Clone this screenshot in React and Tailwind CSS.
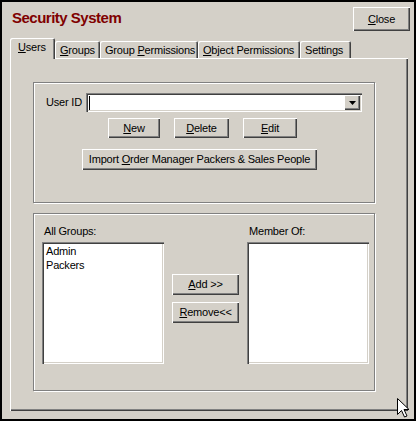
const raised = 'bg-[#d4d0c8] shadow-[inset_1px_1px_0_#fff,inset_-1px_-1px_0_#404040,inset_-2px_-2px_0_#808080]'
const sunken = 'bg-white shadow-[inset_1px_1px_0_#808080,inset_2px_2px_0_#404040,inset_-1px_-1px_0_#fff,inset_-2px_-2px_0_#d4d0c8]'
const etched = 'border border-[#808080] shadow-[inset_1px_1px_0_#fff,1px_1px_0_#fff]'

function Btn({ className = '', children }) {
    return (
        <button className={`${raised} flex items-center justify-center leading-none ${className}`}>
            {children}
        </button>
    )
}

function Tab({ label, hot, rest, active, className = '' }) {
    return (
        <div
            className={`flex items-center rounded-t-[2px] bg-[#d4d0c8] whitespace-nowrap shadow-[inset_1px_1px_0_#fff,inset_-1px_0_0_#404040,inset_-2px_0_0_#808080] ${
                active ? 'pl-[8px] h-[21px] -mb-px relative z-10 pb-[2px]' : 'pl-[5px] h-[17px] pt-[1px]'
            } ${className}`}
        >
            <span>
                {hot && <u>{hot}</u>}
                {rest}
            </span>
        </div>
    )
}

export default function App() {
    const groups = ['Admin', 'Packers']

    return (
        <div className="relative w-[416px] h-[421px] bg-[#d4d0c8] border-2 border-black font-['Liberation_Sans',Arial,sans-serif] text-[11px] tracking-[-0.2px] text-black select-none">
            {/* header */}
            <div className="flex items-start h-[36px]">
                <h1 className="ml-[10px] mt-[7px] text-[15px] leading-[18px] font-bold tracking-[-0.5px] text-[#800000]">
                    Security System
                </h1>
                <Btn className="ml-auto mr-[4px] mt-[5px] w-[57px] h-[24px]">
                    <span><u>C</u>lose</span>
                </Btn>
            </div>

            {/* tabs */}
            <div className="flex items-end ml-[8px] h-[20px]">
                <Tab active hot="U" rest="sers" className="w-[45px]" />
                <Tab hot="G" rest="roups" className="w-[45px]" />
                <Tab rest={<>Group <u>P</u>ermissions</>} className="w-[98px]" />
                <Tab hot="O" rest="bject Permissions" className="w-[102px]" />
                <Tab rest="Settings" className="w-[51px]" />
            </div>

            {/* panel */}
            <div className="ml-[8px] w-[398px] h-[353px] bg-[#d4d0c8] shadow-[inset_1px_1px_0_#fff,inset_-1px_-1px_0_#404040,inset_-2px_-2px_0_#808080] pt-[24px] pl-[23px]">
                {/* user box */}
                <div className={`${etched} w-[342px] h-[121px] flex flex-col`}>
                    <div className="flex items-center mt-[10px] pl-[12px]">
                        <span className="w-[40px]">User ID</span>
                        <div className={`${sunken} w-[276px] h-[19px] flex items-center pl-[2px] pr-[2px]`}>
                            <span className="w-px h-[14px] bg-black ml-[1px]" />
                            <div className={`${raised} ml-auto w-[16px] h-[15px] flex items-center justify-center`}>
                                <svg width="7" height="4" viewBox="0 0 7 4">
                                    <path d="M0 0h7L3.5 4z" fill="#000" />
                                </svg>
                            </div>
                        </div>
                    </div>
                    <div className="flex mt-[6px] pl-[74px]">
                        <Btn className="w-[52px] h-[20px]"><span><u>N</u>ew</span></Btn>
                        <Btn className="ml-[14px] w-[55px] h-[20px]"><span><u>D</u>elete</span></Btn>
                        <Btn className="ml-[14px] w-[54px] h-[20px]"><span><u>E</u>dit</span></Btn>
                    </div>
                    <div className="flex mt-[11px] pl-[48px]">
                        <Btn className="w-[235px] h-[21px]">
                            <span>Import <u>O</u>rder Manager Packers &amp; Sales People</span>
                        </Btn>
                    </div>
                </div>

                {/* groups box */}
                <div className={`${etched} w-[342px] h-[178px] mt-[10px] flex pl-[8px]`}>
                    <div className="flex flex-col pt-[11px]">
                        <span className="ml-[2px] h-[13px] leading-[13px]">All Groups:</span>
                        <div className={`${sunken} mt-[4px] w-[122px] h-[122px] pt-[2px] pl-[4px] flex flex-col leading-[14px]`}>
                            {groups.map(g => (
                                <span key={g}>{g}</span>
                            ))}
                        </div>
                    </div>
                    <div className="flex flex-col pt-[60px] ml-[8px]">
                        <Btn className="w-[67px] h-[21px]"><span><u>A</u>dd &gt;&gt;</span></Btn>
                        <Btn className="mt-[7px] w-[67px] h-[21px]"><span><u>R</u>emove&lt;&lt;</span></Btn>
                    </div>
                    <div className="flex flex-col pt-[11px] ml-[8px]">
                        <span className="ml-[2px] h-[13px] leading-[13px]">Member Of:</span>
                        <div className={`${sunken} mt-[4px] w-[122px] h-[122px]`} />
                    </div>
                </div>
            </div>

            {/* mouse pointer */}
            <svg className="absolute left-[395px] top-[396px]" width="13" height="20" viewBox="0 0 13 20">
                <path d="M0.5 0.5V16.5L4.5 12.5L7.5 19L10 18L7 11.5H12Z" fill="#fff" stroke="#000" strokeWidth="1" />
            </svg>
        </div>
    )
}
